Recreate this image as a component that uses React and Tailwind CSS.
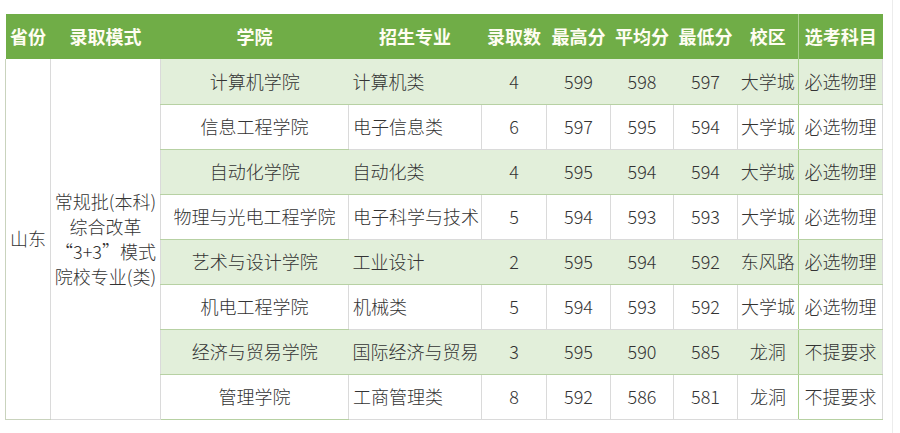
import React from "react";

const rows = [
  ["计算机学院", "计算机类", "4", "599", "598", "597", "大学城", "必选物理"],
  ["信息工程学院", "电子信息类", "6", "597", "595", "594", "大学城", "必选物理"],
  ["自动化学院", "自动化类", "4", "595", "594", "594", "大学城", "必选物理"],
  ["物理与光电工程学院", "电子科学与技术", "5", "594", "593", "593", "大学城", "必选物理"],
  ["艺术与设计学院", "工业设计", "2", "595", "594", "592", "东风路", "必选物理"],
  ["机电工程学院", "机械类", "5", "594", "593", "592", "大学城", "必选物理"],
  ["经济与贸易学院", "国际经济与贸易", "3", "595", "590", "585", "龙洞", "不提要求"],
  ["管理学院", "工商管理类", "8", "592", "586", "581", "龙洞", "不提要求"],
];

const heads = ["省份", "录取模式", "学院", "招生专业", "录取数", "最高分", "平均分", "最低分", "校区", "选考科目"];

const App = () => {
  return (
    <div className="h-[433px] w-[893px] border-r border-[#ececec] bg-white pl-[5px] pt-[14px] font-['Noto_Sans_CJK_SC',sans-serif] font-light text-[#333]">
      <table className="table-fixed border-collapse w-[877px]">
        <colgroup>
          <col className="w-[45px]" />
          <col className="w-[110px]" />
          <col className="w-[188px]" />
          <col className="w-[133px]" />
          <col className="w-[65px]" />
          <col className="w-[64px]" />
          <col className="w-[63px]" />
          <col className="w-[64px]" />
          <col className="w-[61px]" />
          <col className="w-[84px]" />
        </colgroup>
        <thead>
          <tr className="h-[45px] bg-[#70ad47] text-[#fffdf2]">
            {heads.map((h, i) => (
              <th
                key={h}
                className={
                  "p-0 text-center text-[18px] font-bold whitespace-nowrap" +
                  (i === 9 ? " border-l border-[#a9d08e]" : "")
                }
              >
                {h}
              </th>
            ))}
          </tr>
        </thead>
        <tbody>
          {rows.map((r, idx) => {
            const green = idx % 2 === 0;
            const vline = green ? "" : " border-l border-[#dadada]";
            return (
              <tr key={idx} className={"h-[45px] text-[18px] " + (green ? "bg-[#e2efda]" : "bg-white")}>
                {idx === 0 && (
                  <>
                    <td rowSpan={8} className="border-l border-b border-[#c9d3bd] bg-white p-0 text-center">
                      山东
                    </td>
                    <td rowSpan={8} className="border-l border-b border-[#dadada] bg-white p-0 text-center leading-[25px]">
                      常规批(本科)
                      <br />
                      综合改革
                      <br />
                      “3+3”模式
                      <br />
                      院校专业(类)
                    </td>
                  </>
                )}
                <td className="border-b border-l border-b-[#b7d1a3] border-l-[#dadada] p-0 text-center whitespace-nowrap">
                  {r[0]}
                </td>
                <td className={"border-b border-[#b7d1a3] pl-[4px] text-left whitespace-nowrap" + vline}>{r[1]}</td>
                <td className={"border-b border-[#b7d1a3] p-0 text-center" + vline}>{r[2]}</td>
                <td className={"border-b border-[#b7d1a3] p-0 text-center" + vline}>{r[3]}</td>
                <td className={"border-b border-[#b7d1a3] p-0 text-center" + vline}>{r[4]}</td>
                <td className={"border-b border-[#b7d1a3] p-0 text-center" + vline}>{r[5]}</td>
                <td className={"border-b border-[#b7d1a3] p-0 text-center whitespace-nowrap" + vline}>{r[6]}</td>
                <td className="border-b border-l border-r border-b-[#b7d1a3] border-l-[#a9d08e] border-r-[#dadada] p-0 text-center whitespace-nowrap">
                  {r[7]}
                </td>
              </tr>
            );
          })}
        </tbody>
      </table>
    </div>
  );
};

export default App;
